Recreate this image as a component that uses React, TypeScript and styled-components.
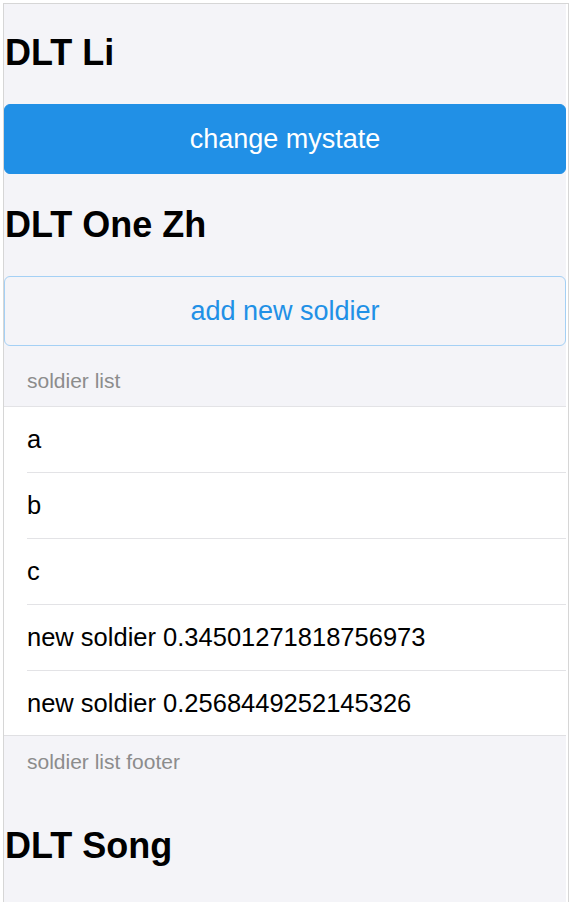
import React from "react";
import styled, { createGlobalStyle } from "styled-components";

const Global = createGlobalStyle`
  html, body { margin: 0; padding: 0; background: #ffffff; }
  body { font-family: "Liberation Sans", Arial, Helvetica, sans-serif; }
  * { box-sizing: border-box; }
`;

const Page = styled.div`
  padding: 3px 3px 0 3px;
`;

const Frame = styled.div`
  border-top: 1px solid #d6d6d6;
  border-left: 1px solid #d6d6d6;
  border-right: 1px solid #d6d6d6;
  padding-right: 2px;
  background: #ffffff;
`;

const Screen = styled.div`
  display: flow-root;
  background: #f4f4f8;
  min-height: 920px;
`;

const Title = styled.h1`
  margin: 31px 0 31px 1px;
  font-size: 36px;
  line-height: 40px;
  font-weight: 700;
  color: #000;
  &:first-child { margin-top: 29px; }
`;

const Button = styled.button<{ $outline?: boolean }>`
  display: block;
  width: 100%;
  height: 70px;
  margin: 0;
  border-radius: 6px;
  font-family: "Liberation Sans", Arial, Helvetica, sans-serif;
  font-size: 27px;
  cursor: pointer;
  border: 1px solid ${(p) => (p.$outline ? "#a4d0f5" : "#2190e6")};
  background: ${(p) => (p.$outline ? "transparent" : "#2190e6")};
  color: ${(p) => (p.$outline ? "#2190e6" : "#ffffff")};
`;

const ListHeader = styled.div`
  padding: 23px 23px 13px;
  font-size: 21px;
  line-height: 24px;
  color: #8c8c8c;
  border-bottom: 1px solid #e3e3e6;
`;

const List = styled.ul`
  list-style: none;
  margin: 0;
  padding: 0 0 0 23px;
  background: #ffffff;
  border-bottom: 1px solid #e0e0e3;
`;

const Item = styled.li`
  height: 66px;
  display: flex;
  align-items: center;
  font-size: 25.5px;
  color: #000;
  border-bottom: 1px solid #e3e3e6;
  &:last-child { border-bottom: none; height: 64px; }
`;

const ListFooter = styled.div`
  padding: 14px 23px 21px;
  font-size: 21px;
  line-height: 24px;
  color: #8c8c8c;
`;

const soldiers = ["a", "b", "c", "new soldier 0.34501271818756973", "new soldier 0.2568449252145326"];

export default function App() {
  return (
    <Page>
      <Global />
      <Frame>
        <Screen>
          <Title>DLT Li</Title>
          <Button>change mystate</Button>
          <Title>DLT One Zh</Title>
          <Button $outline>add new soldier</Button>
          <ListHeader>soldier list</ListHeader>
          <List>
            {soldiers.map((s) => (
              <Item key={s}>{s}</Item>
            ))}
          </List>
          <ListFooter>soldier list footer</ListFooter>
          <Title>DLT Song</Title>
        </Screen>
      </Frame>
    </Page>
  );
}
